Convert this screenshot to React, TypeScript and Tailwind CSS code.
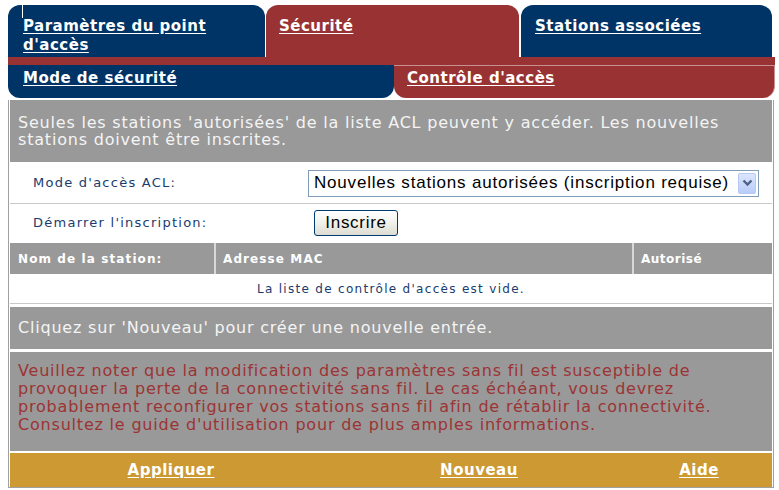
import React from "react";

const BLUE = "bg-[#003366]";
const RED = "bg-[#993333]";

function Chevron() {
  return (
    <svg width="11" height="8" viewBox="0 0 11 8">
      <path d="M1.5 1.5 L5.5 5.5 L9.5 1.5" fill="none" stroke="#4d6185" strokeWidth="2.4" />
    </svg>
  );
}

export default function App() {
  return (
    <div className="w-[779px] h-[490px] bg-white pt-[5px] pl-[8px] font-['DejaVu_Sans',Verdana,sans-serif] overflow-hidden">
      <div className="w-[767px]">
        {/* main tabs */}
        <div className="flex h-[52px] gap-px text-[15px] leading-[19px] font-bold tracking-[0.5px] text-white">
          <div className={`relative w-[257px] ${BLUE} rounded-t-[12px] pl-[15px] pr-[8px] pt-[12px]`}>
            <span className="absolute left-[14px] top-0 h-[13px] w-px bg-white" />
            <a className="underline underline-offset-2">Paramètres du point d'accès</a>
          </div>
          <div className={`w-[253px] ${RED} rounded-t-[12px] pl-[13px] pt-[12px]`}>
            <a className="underline underline-offset-2">Sécurité</a>
          </div>
          <div className={`w-[251px] ml-px ${BLUE} rounded-t-[12px] pl-[14px] pt-[12px]`}>
            <a className="underline underline-offset-2">Stations associées</a>
          </div>
        </div>
        <div className={`h-[8px] ${RED}`} />

        {/* sub tabs */}
        <div className="flex h-[33px] text-[15px] leading-[19px] font-bold tracking-[0.5px] text-white">
          <div className={`w-[386px] ${BLUE} rounded-b-[12px] pl-[15px] pt-[4px]`}>
            <a className="underline underline-offset-2">Mode de sécurité</a>
          </div>
          <div className={`flex-1 ${RED} rounded-b-[12px] border-t border-r border-[#c79191] pl-[13px] pt-[3px]`}>
            <a className="underline underline-offset-2">Contrôle d'accès</a>
          </div>
        </div>

        {/* body */}
        <div className="mt-[2px] w-[766px] border-x border-[#a0a0a0] px-px">
          <div className="h-[62px] bg-[#999999] px-[8px] pt-[14px] text-[16px] leading-[17px] tracking-[0.8px] text-[#f4f4f4]">
            Seules les stations 'autorisées' de la liste ACL peuvent y accéder. Les nouvelles stations doivent être inscrites.
          </div>

          <div className="mt-px flex h-[40px] items-center">
            <div className="w-[298px] pl-[23px] text-[13px] tracking-[1.25px] text-[#1a3c6e]">Mode d'accès ACL:</div>
            <div className="flex h-[27px] w-[451px] items-center border border-[#7f9db9] bg-white pl-[5px] pr-[2px] font-['Liberation_Sans',Arial,sans-serif] text-[17px] tracking-[0.8px] text-black">
              <span className="flex-1 whitespace-nowrap">Nouvelles stations autorisées (inscription requise)</span>
              <span className="flex h-[21px] w-[18px] items-center justify-center rounded-[2px] border border-[#b6c9f5] bg-gradient-to-b from-[#dde6fd] to-[#b8cdf9]">
                <Chevron />
              </span>
            </div>
          </div>
          <div className="h-px bg-[#c8c8c8]" />

          <div className="flex h-[38px] items-center">
            <div className="w-[304px] pl-[23px] text-[13px] tracking-[1.25px] text-[#1a3c6e]">Démarrer l'inscription:</div>
            <button className="h-[26px] w-[84px] rounded-[3px] border border-[#003c74] bg-gradient-to-b from-[#ffffff] via-[#f1f1ec] to-[#dcdcd3] font-['Liberation_Sans',Arial,sans-serif] text-[17px] tracking-[0.7px] leading-[20px] text-black">
              Inscrire
            </button>
          </div>

          <div className="mt-px flex h-[31px] bg-[#999999] text-[12px] font-bold tracking-[1.1px] text-white">
            <div className="flex w-[206px] items-center border-r-2 border-[#d8d8d8] pl-[8px]">Nom de la station:</div>
            <div className="flex w-[418px] items-center border-r-2 border-[#d8d8d8] pl-[7px]">Adresse MAC</div>
            <div className="flex flex-1 items-center pl-[7px] tracking-[0.5px]">Autorisé</div>
          </div>
          <div className="flex h-[29px] items-center justify-center text-[12px] tracking-[1.3px] text-[#1a3c6e]">
            La liste de contrôle d'accès est vide.
          </div>
          <div className="h-px bg-[#c8c8c8]" />

          <div className="mt-[3px] flex h-[42px] items-center bg-[#999999] px-[8px] text-[16px] tracking-[0.8px] text-[#f4f4f4]">
            Cliquez sur 'Nouveau' pour créer une nouvelle entrée.
          </div>

          <div className="mt-[3px] h-[99px] bg-[#999999] px-[8px] pt-[10px] text-[16px] leading-[18px] tracking-[0.8px] text-[#9c3434]">
            Veuillez noter que la modification des paramètres sans fil est susceptible de provoquer la perte de la connectivité sans fil. Le cas échéant, vous devrez probablement reconfigurer vos stations sans fil afin de rétablir la connectivité. Consultez le guide d'utilisation pour de plus amples informations.
          </div>

          <div className="mt-[2px] grid h-[34px] grid-cols-[322px_294px_1fr] items-center bg-[#cc9933] text-[15px] font-bold tracking-[0.5px] text-white">
            <a className="text-center underline underline-offset-2">Appliquer</a>
            <a className="text-center underline underline-offset-2">Nouveau</a>
            <a className="text-center underline underline-offset-2">Aide</a>
          </div>
        </div>
        <div className="h-px w-[766px] bg-[#a0a0a0]" />
      </div>
    </div>
  );
}
